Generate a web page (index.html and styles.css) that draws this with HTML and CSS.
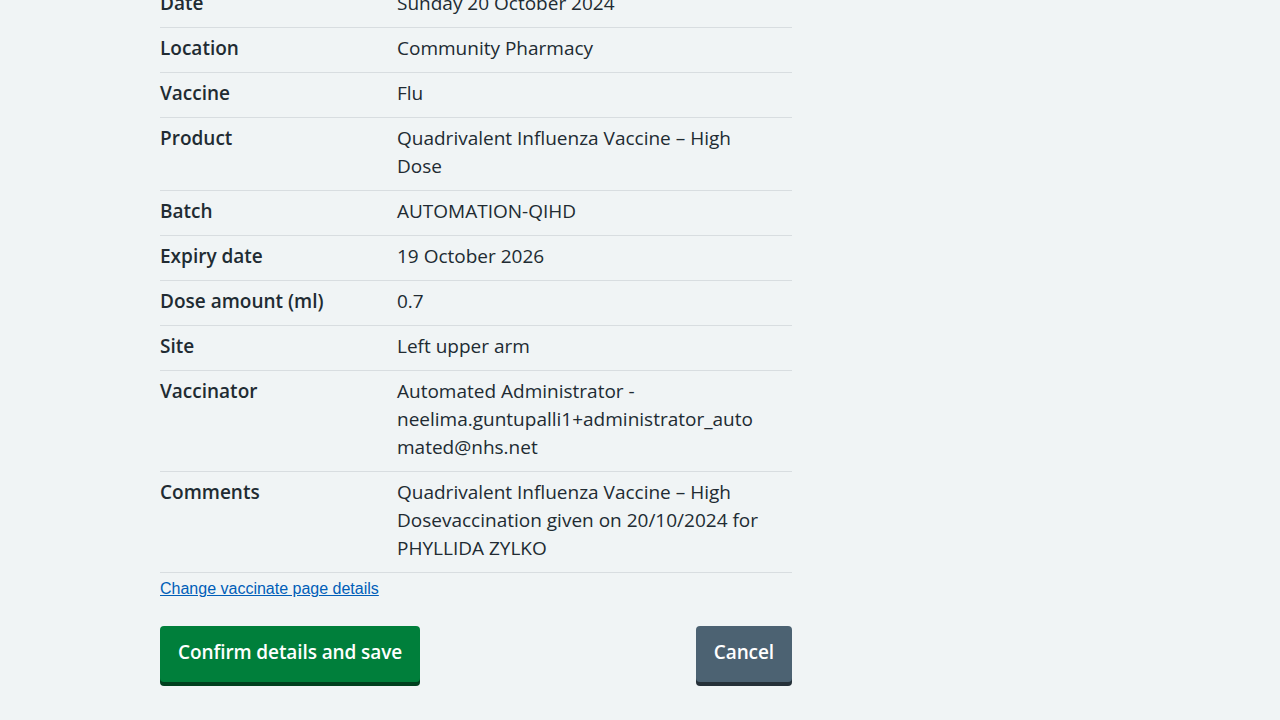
FILE: index.html
```html
<!DOCTYPE html>
<html lang="en">
<head>
<meta charset="utf-8">
<title>Check and confirm</title>
<link rel="stylesheet" href="styles.css">
</head>
<body>
<main class="page">
  <dl class="summary">
    <div class="row"><dt class="key">Date</dt><dd class="value">Sunday 20 October 2024</dd></div>
    <div class="row"><dt class="key">Location</dt><dd class="value">Community Pharmacy</dd></div>
    <div class="row"><dt class="key">Vaccine</dt><dd class="value">Flu</dd></div>
    <div class="row"><dt class="key">Product</dt><dd class="value">Quadrivalent Influenza Vaccine – High Dose</dd></div>
    <div class="row"><dt class="key">Batch</dt><dd class="value">AUTOMATION-QIHD</dd></div>
    <div class="row"><dt class="key">Expiry date</dt><dd class="value">19 October 2026</dd></div>
    <div class="row"><dt class="key">Dose amount (ml)</dt><dd class="value">0.7</dd></div>
    <div class="row"><dt class="key">Site</dt><dd class="value">Left upper arm</dd></div>
    <div class="row"><dt class="key">Vaccinator</dt><dd class="value">Automated Administrator - neelima.guntupalli1+administrator_automated@nhs.net</dd></div>
    <div class="row"><dt class="key">Comments</dt><dd class="value">Quadrivalent Influenza Vaccine – High Dosevaccination given on 20/10/2024 for PHYLLIDA ZYLKO</dd></div>
  </dl>
  <p class="change"><a class="change-link" href="#">Change vaccinate page details</a></p>
  <div class="actions">
    <button class="button button-primary" type="button">Confirm details and save</button>
    <button class="button button-secondary" type="button">Cancel</button>
  </div>
</main>
</body>
</html>
```

FILE: styles.css
```css
html, body {
  margin: 0;
  padding: 0;
  background: #f0f4f5;
}

body {
  font-family: "Open Sans", "Noto Sans", sans-serif;
  color: #212b32;
  font-size: 19px;
  line-height: 28px;
}

.page {
  width: 632px;
  margin-left: 160px;
  padding-bottom: 40px;
}

.summary {
  margin: -17px 0 0 0;
  padding: 0;
}

.row {
  display: grid;
  grid-template-columns: 237px 1fr;
  border-bottom: 1px solid #d8dde0;
}

.key {
  font-weight: 600;
  padding: 6px 24px 10px 0;
  margin: 0;
}

.value {
  margin: 0;
  padding: 6px 24px 10px 0;
  overflow-wrap: anywhere;
}

.change {
  margin: 6px 0 0 0;
  font-family: "Liberation Sans", Arial, sans-serif;
  font-size: 16px;
  line-height: 19px;
}

.change-link {
  color: #005eb8;
  text-decoration: underline;
}

.actions {
  display: flex;
  justify-content: space-between;
  margin-top: 28px;
}

.button {
  font-family: "Open Sans", "Noto Sans", sans-serif;
  font-size: 19px;
  line-height: 28px;
  font-weight: 600;
  letter-spacing: -0.1px;
  color: #ffffff;
  border: 0;
  border-radius: 4px;
  padding: 12px 18px 16px;
  cursor: pointer;
}

.button-primary {
  background: #007f3b;
  box-shadow: 0 4px 0 #00401e;
}

.button-secondary {
  background: #4c6272;
  box-shadow: 0 4px 0 #263139;
}
```
